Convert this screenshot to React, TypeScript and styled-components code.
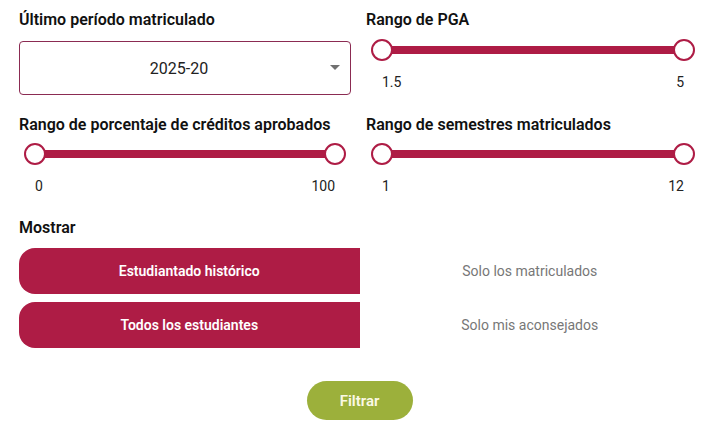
import React from "react";
import styled, { createGlobalStyle } from "styled-components";

const GlobalStyle = createGlobalStyle`
  html, body {
    margin: 0;
    padding: 0;
    background: #ffffff;
    font-family: Roboto, "Noto Sans", "Liberation Sans", sans-serif;
    color: #111111;
  }
  * { box-sizing: border-box; }
`;

const RED = "#ae1c45";

const Page = styled.div`
  width: 708px;
  padding: 10px 8px 0 19px;
  display: flex;
  flex-direction: column;
`;

const Grid = styled.div`
  display: grid;
  grid-template-columns: 332px 334px;
  column-gap: 15px;
  row-gap: 20px;
  align-items: start;
`;

const Field = styled.div`
  display: flex;
  flex-direction: column;
`;

const Heading = styled.div`
  font-size: 16px;
  line-height: 19px;
  font-weight: 600;
  color: #111;
  white-space: nowrap;
`;

const SelectBox = styled.div`
  margin-top: 12px;
  height: 54px;
  padding-right: 12px;
  border: 1px solid #8b2b52;
  border-radius: 4px;
  display: flex;
  align-items: center;
  justify-content: center;
  position: relative;
  font-size: 16px;
  color: #222;
`;

const Arrow = styled.span`
  position: absolute;
  right: 10px;
  top: 50%;
  margin-top: -3px;
  width: 0;
  height: 0;
  border-left: 5px solid transparent;
  border-right: 5px solid transparent;
  border-top: 5px solid #707070;
`;

const SliderWrap = styled.div<{ $gap: number }>`
  margin-top: ${(p) => p.$gap}px;
  padding: 0 5px;
`;

const SliderTrack = styled.div`
  position: relative;
  height: 22px;
`;

const Fill = styled.div`
  position: absolute;
  top: 7px;
  height: 8px;
  background: ${RED};
`;

const Thumb = styled.div`
  position: absolute;
  top: 0;
  width: 22px;
  height: 22px;
  margin-left: -11px;
  border-radius: 50%;
  background: #fff;
  border: 2px solid ${RED};
`;

const Labels = styled.div`
  margin-top: 13px;
  padding: 0 16px;
  display: flex;
  justify-content: space-between;
  font-size: 14px;
  line-height: 16px;
  color: #222;
`;

type RangeProps = { title: string; min: string; max: string; gap: number };

const Range = ({ title, min, max, gap }: RangeProps) => (
  <Field>
    <Heading>{title}</Heading>
    <SliderWrap $gap={gap}>
      <SliderTrack>
        <Fill style={{ left: "11px", right: "11px" }} />
        <Thumb style={{ left: "11px" }} />
        <Thumb style={{ left: "calc(100% - 11px)" }} />
      </SliderTrack>
    </SliderWrap>
    <Labels>
      <span>{min}</span>
      <span>{max}</span>
    </Labels>
  </Field>
);

const ShowSection = styled.div`
  margin-top: 24px;
  display: flex;
  flex-direction: column;
`;

const Toggles = styled.div`
  margin-top: 11px;
  display: flex;
  flex-direction: column;
  gap: 8px;
`;

const ToggleRow = styled.div`
  display: flex;
  height: 46px;
`;

const Option = styled.div<{ $active: boolean }>`
  flex: 1;
  display: flex;
  align-items: center;
  justify-content: center;
  font-size: 14px;
  font-weight: ${(p) => (p.$active ? 600 : 400)};
  color: ${(p) => (p.$active ? "#ffffff" : "#777777")};
  background: ${(p) => (p.$active ? RED : "transparent")};
  border-radius: ${(p) => (p.$active ? "16px 0 0 16px" : "0")};
`;

const ButtonRow = styled.div`
  margin-top: 33px;
  display: flex;
  justify-content: center;
`;

const FilterButton = styled.button`
  width: 106px;
  height: 39px;
  border: none;
  border-radius: 20px;
  background: #9cb03b;
  color: #fbf9e6;
  font-family: Roboto, "Noto Sans", sans-serif;
  font-size: 15px;
  font-weight: 600;
  cursor: pointer;
`;

export default function App() {
  return (
    <>
      <GlobalStyle />
      <Page>
        <Grid>
          <Field>
            <Heading>Último período matriculado</Heading>
            <SelectBox>
              2025-20
              <Arrow />
            </SelectBox>
          </Field>
          <Range title="Rango de PGA" min="1.5" max="5" gap={10} />
          <Range title="Rango de porcentaje de créditos aprobados" min="0" max="100" gap={9} />
          <Range title="Rango de semestres matriculados" min="1" max="12" gap={9} />
        </Grid>
        <ShowSection>
          <Heading>Mostrar</Heading>
          <Toggles>
            <ToggleRow>
              <Option $active>Estudiantado histórico</Option>
              <Option $active={false}>Solo los matriculados</Option>
            </ToggleRow>
            <ToggleRow>
              <Option $active>Todos los estudiantes</Option>
              <Option $active={false}>Solo mis aconsejados</Option>
            </ToggleRow>
          </Toggles>
        </ShowSection>
        <ButtonRow>
          <FilterButton>Filtrar</FilterButton>
        </ButtonRow>
      </Page>
    </>
  );
}
